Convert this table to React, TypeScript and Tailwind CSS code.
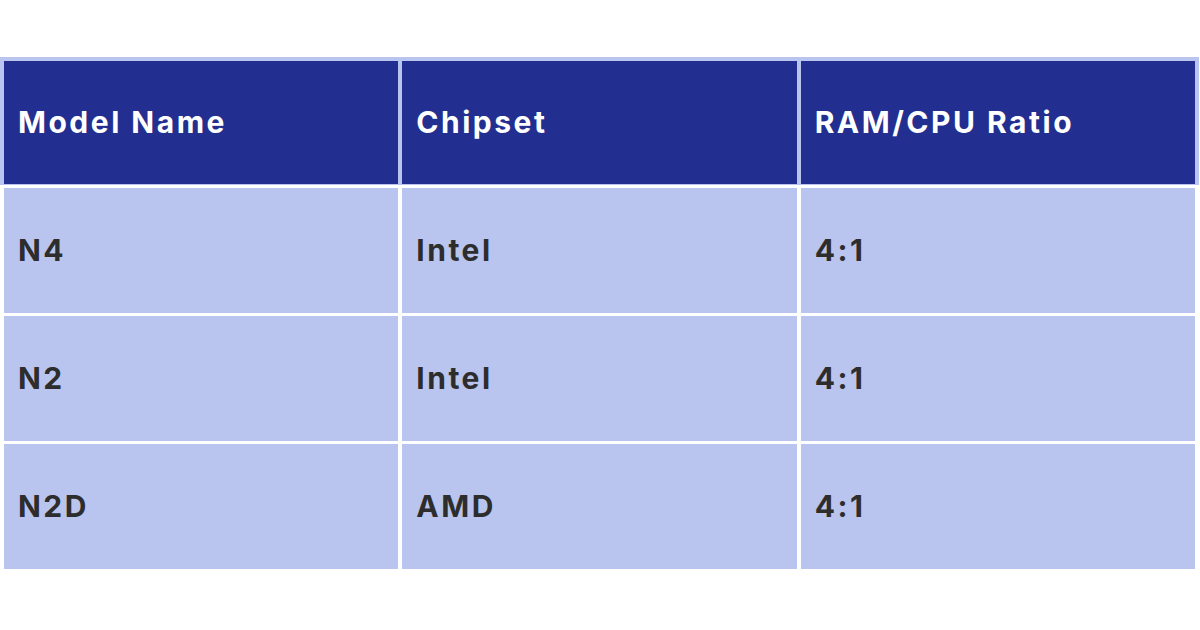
import React from "react";

const rows = [
  ["N4", "Intel", "4:1"],
  ["N2", "Intel", "4:1"],
  ["N2D", "AMD", "4:1"],
];

export default function App() {
  return (
    <div
      className="w-[1200px] h-[630px] bg-white pt-[57px]"
      style={{ fontFamily: "Inter, 'Noto Sans', sans-serif" }}
    >
      <div className="w-[1199px]">
        <div className="bg-[#b9c5ee] pt-[4px] px-[4px] pb-px">
          <div className="grid grid-cols-3 gap-[4px]">
            {["Model Name", "Chipset", "RAM/CPU Ratio"].map((h) => (
              <div
                key={h}
                className="h-[123px] bg-[#222f91] flex items-center pl-[14px] text-white text-[30px] font-bold tracking-[2.5px]"
              >
                {h}
              </div>
            ))}
          </div>
        </div>
        <div className="mt-[3px] px-[4px] flex flex-col gap-[3px]">
          {rows.map((r, i) => (
            <div key={i} className="grid grid-cols-3 gap-[4px]">
              {r.map((c, j) => (
                <div
                  key={j}
                  className="h-[125px] bg-[#b9c5ee] flex items-center pl-[14px] text-[#2d2d2d] text-[30px] font-bold tracking-[2.5px]"
                >
                  {c}
                </div>
              ))}
            </div>
          ))}
        </div>
      </div>
    </div>
  );
}
